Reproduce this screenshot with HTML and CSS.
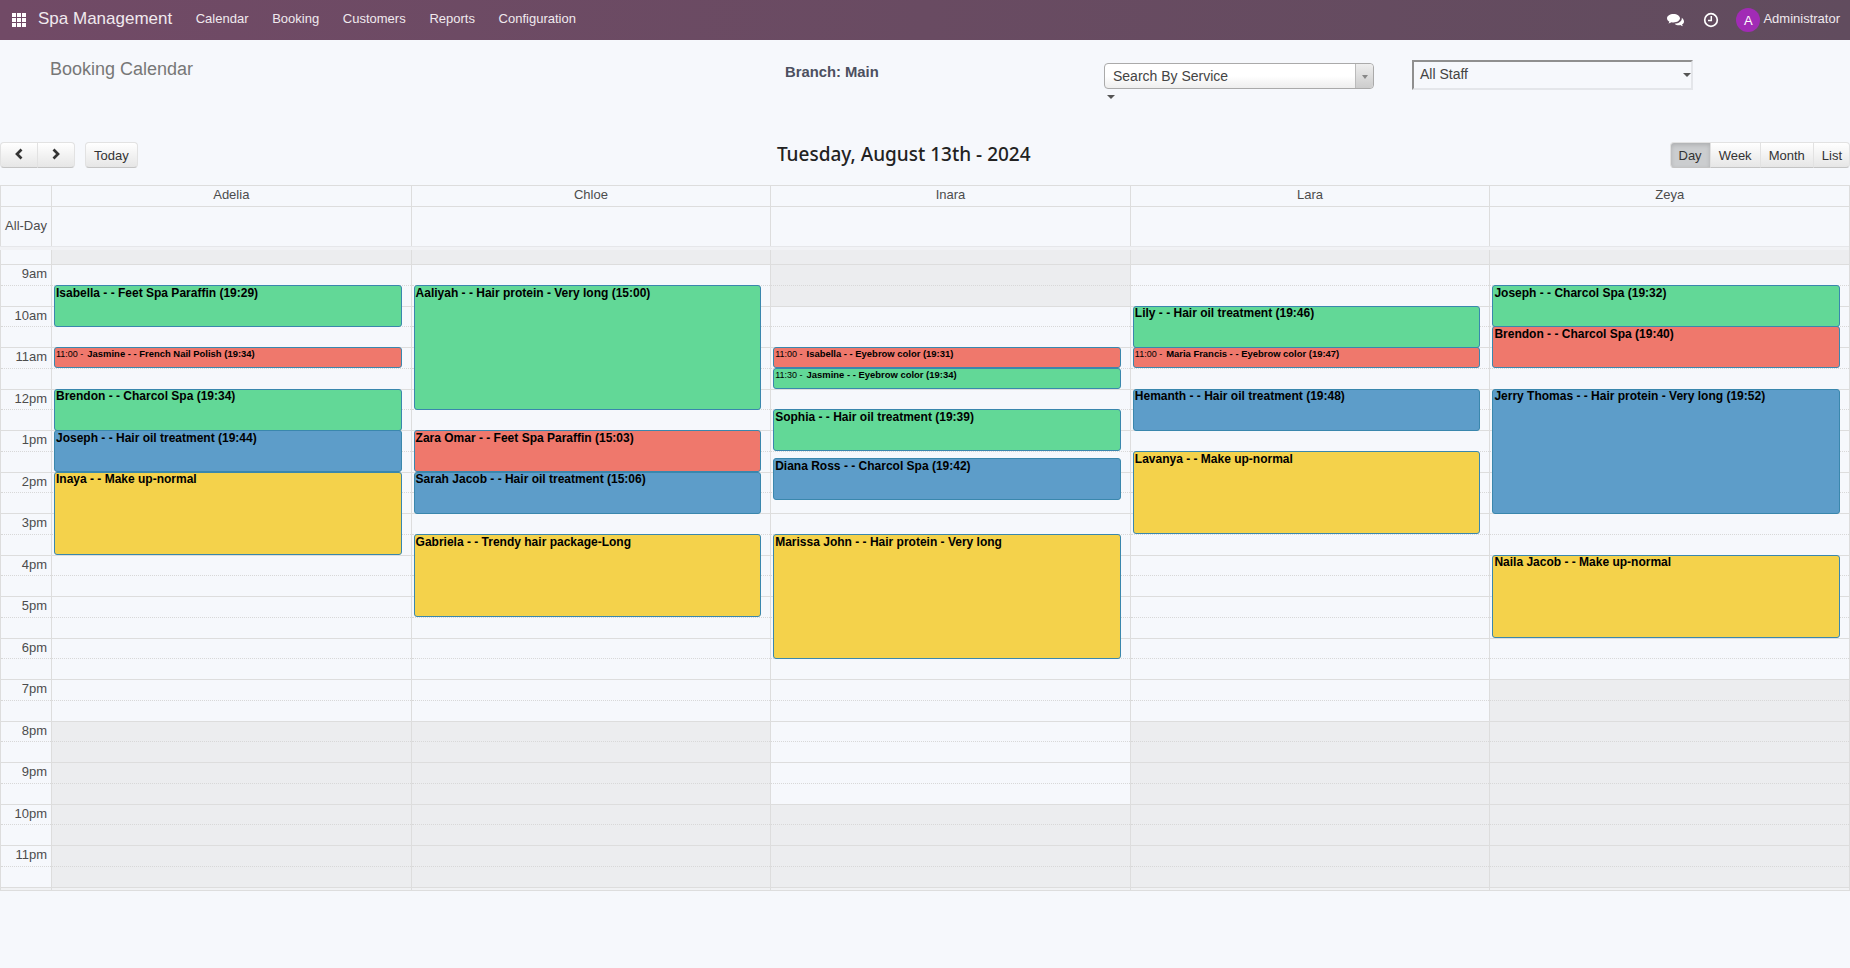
FILE: index.html
```html
<!DOCTYPE html>
<html lang="en">
<head>
    <meta charset="UTF-8">
    <title>Booking Calendar</title>
    <link rel="stylesheet" href="styles.css">
</head>
<body>

<nav class="navbar">
    <svg class="apps-icon" width="14" height="14" viewBox="0 0 14 14" fill="#fff">
        <rect x="0" y="0" width="4" height="4"/><rect x="5" y="0" width="4" height="4"/><rect x="10" y="0" width="4" height="4"/>
        <rect x="0" y="5" width="4" height="4"/><rect x="5" y="5" width="4" height="4"/><rect x="10" y="5" width="4" height="4"/>
        <rect x="0" y="10" width="4" height="4"/><rect x="5" y="10" width="4" height="4"/><rect x="10" y="10" width="4" height="4"/>
    </svg>
    <span class="brand">Spa Management</span>
    <a class="nav-link">Calendar</a>
    <a class="nav-link">Booking</a>
    <a class="nav-link">Customers</a>
    <a class="nav-link">Reports</a>
    <a class="nav-link">Configuration</a>
    <div class="nav-right">
        <svg class="chat-icon" width="17" height="14" viewBox="0 0 17 14" fill="#fff">
            <path d="M6.500 0C2.900 0 0 1.900 0 4.300c0 1.400.9 2.600 2.400 3.400-.2.700-.6 1.300-1.100 1.800 1.200-.2 2.300-.7 3.100-1.300.7.100 1.400.2 2.100.2 3.600 0 6.500-1.900 6.500-4.100S10.100 0 6.500 0z"/>
            <path d="M14.700 3.700c.1.300.1.500.1.800 0 2.900-3 5-7.100 5.200 1 1 2.500 1.500 4.100 1.500.5 0 1-.1 1.500-.2.700.6 1.600 1 2.600 1.200-.4-.5-.7-1-.9-1.600 1.300-.7 2-1.800 2-3.100 0-1.500-.9-2.900-2.300-3.800z"/>
        </svg>
        <svg class="clock-icon" width="16" height="16" viewBox="0 0 16 16" fill="none" stroke="#fff">
            <circle cx="8" cy="8" r="6.300" stroke-width="1.700"/>
            <path d="M8.300 4v4.400H5" stroke-width="1.500"/>
        </svg>
        <span class="avatar">A</span>
        <span class="user-name">Administrator</span>
    </div>
</nav>

<div class="filter-bar">
    <h3 class="page-title">Booking Calendar</h3>
    <div class="branch">Branch: Main</div>
    <div class="service-wrap">
        <div class="service-select">
            <span class="service-text">Search By Service</span>
            <span class="service-arrow"><i class="caret small"></i></span>
        </div>
        <i class="caret stray-caret"></i>
    </div>
    <div class="staff-select">
        <span>All Staff</span>
        <i class="caret"></i>
    </div>
</div>

<div class="toolbar">
    <div class="toolbar-left">
        <div class="btn-group">
            <button class="btn chevron-btn"><svg width="10" height="12" viewBox="0 0 10 12" fill="none" stroke="#333" stroke-width="2.700"><path d="M7.500 1.500 3 6l4.500 4.500"/></svg></button>
            <button class="btn chevron-btn"><svg width="10" height="12" viewBox="0 0 10 12" fill="none" stroke="#333" stroke-width="2.700"><path d="M2.500 1.500 7 6l-4.500 4.500"/></svg></button>
        </div>
        <button class="btn today-btn">Today</button>
    </div>
    <h2 class="cal-title">Tuesday, August 13th - 2024</h2>
    <div class="btn-group">
        <button class="btn view-btn active">Day</button>
        <button class="btn view-btn">Week</button>
        <button class="btn view-btn">Month</button>
        <button class="btn view-btn list-btn">List</button>
    </div>
</div>

<div class="calendar">
    <div class="cal-head">
        <div class="gutter-cell"></div>
        <div class="head-cell">Adelia</div>
        <div class="head-cell">Chloe</div>
        <div class="head-cell">Inara</div>
        <div class="head-cell">Lara</div>
        <div class="head-cell">Zeya</div>
    </div>
    <div class="cal-allday">
        <div class="gutter-cell allday-label">All-Day</div>
        <div class="allday-cell"></div>
        <div class="allday-cell"></div>
        <div class="allday-cell"></div>
        <div class="allday-cell"></div>
        <div class="allday-cell"></div>
    </div>
    <div class="divider"></div>
    <div class="cal-body" id="cal-body"></div>
</div>

<script src="calendar.js"></script>
</body>
</html>
```

FILE: styles.css
```css
* {
    box-sizing: border-box;
}
html, body {
    height: 100%;
}
body {
    margin: 0;
    background-color: #f6f8fc;
    font-family: "Liberation Sans", Arial, sans-serif;
    font-size: 13px;
    color: #4c4c4c;
    overflow: hidden;
}

/* top bar */
.navbar {
    display: flex;
    align-items: center;
    height: 40px;
    padding-left: 12px;
    background-image: linear-gradient(to right, #714a66, #614c5e);
    color: #fff;
}
.apps-icon {
    margin-right: 12px;
}
.brand {
    font-size: 17px;
    margin-right: 23.500px;
    margin-top: -3px;
    color: #f0e9ee;
}
.nav-link {
    font-size: 13px;
    margin-right: 23.700px;
    margin-top: -3px;
    color: #f0e9ee;
}
.nav-right {
    display: flex;
    align-items: center;
    margin-left: auto;
    padding-right: 10px;
}
.chat-icon {
    margin-right: 19px;
    margin-top: 1px;
}
.clock-icon {
    margin-right: 17px;
}
.avatar {
    width: 24px;
    height: 24px;
    margin-right: 3px;
    border-radius: 50%;
    background-color: #a12bb5;
    font-size: 13px;
    line-height: 25px;
    text-align: center;
}
.user-name {
    font-size: 13px;
    color: #f0e9ee;
    margin-top: -4px;
}

/* filters */
.filter-bar {
    display: flex;
    height: 100px;
}
.page-title {
    width: 735px;
    margin: 19px 0 0 50px;
    font-size: 18px;
    font-weight: 400;
    line-height: 21px;
    color: #777;
}
.branch {
    width: 319px;
    margin-top: 24px;
    font-size: 14.800px;
    font-weight: bold;
    line-height: 17px;
    color: #4c5060;
}
.service-wrap {
    width: 308px;
    margin-top: 23px;
}
.service-select {
    display: flex;
    width: 270px;
    height: 26px;
    border: 1px solid #aaa;
    border-radius: 4px;
    background-image: linear-gradient(to bottom, #fff 50%, #eee);
    font-size: 14px;
    line-height: 24px;
    color: #444;
}
.service-text {
    flex: 1;
    padding-left: 8px;
}
.service-arrow {
    display: flex;
    align-items: center;
    justify-content: center;
    width: 18px;
    border-left: 1px solid #bbb;
    border-radius: 0 4px 4px 0;
    background-image: linear-gradient(to bottom, #eee, #ccc);
}
.caret {
    display: inline-block;
    border-top: 4px solid #555;
    border-left: 4px solid transparent;
    border-right: 4px solid transparent;
}
.caret.small {
    margin-top: 2px;
    border-top-color: #888;
    border-left-width: 3px;
    border-right-width: 3px;
}
.stray-caret {
    display: block;
    width: 0;
    margin: 6px 0 0 3px;
}
.staff-select {
    display: flex;
    align-items: center;
    justify-content: space-between;
    width: 281px;
    height: 30px;
    margin-top: 20px;
    padding-left: 6px;
    border: 2px solid;
    border-color: #8f8f8f #e4e6ea #e4e6ea #8f8f8f;
    font-size: 14px;
    color: #444;
}
.staff-select span {
    margin-top: -3px;
}

/* calendar toolbar */
.toolbar {
    display: flex;
    align-items: flex-start;
    justify-content: space-between;
    height: 45px;
    padding-top: 2px;
}
.toolbar-left {
    display: flex;
    width: 138px;
}
.btn-group {
    display: flex;
}
.btn {
    height: 26px;
    padding: 0 8px;
    border: 1px solid #e2e2e2;
    border-bottom-color: #c4c4c4;
    background-image: linear-gradient(to bottom, #fff, #e6e6e6);
    font-family: "Liberation Sans", Arial, sans-serif;
    font-size: 13px;
    color: #333;
}
.btn + .btn {
    margin-left: -1px;
}
.btn-group .btn:first-child {
    border-radius: 4px 0 0 4px;
}
.btn-group .btn:last-child {
    border-radius: 0 4px 4px 0;
}
.chevron-btn {
    width: 38px;
}
.today-btn {
    margin-left: 10px;
    border-radius: 4px;
}
.view-btn.active {
    background-image: none;
    background-color: #cbcdcf;
    box-shadow: inset 0 2px 4px rgba(0, 0, 0, 0.15);
}
.list-btn {
    padding-right: 7px;
}
.cal-title {
    margin: 1px 0 0;
    font-family: "Noto Sans", sans-serif;
    font-size: 19px;
    font-weight: 500;
    line-height: 22px;
    color: #222;
}

/* calendar grid */
.calendar {
    border-right: 1px solid #ddd;
    border-bottom: 1px solid #ddd;
}
.cal-head, .cal-allday, .cal-body {
    display: grid;
    grid-template-columns: 51px repeat(5, 1fr);
}
.cal-head {
    height: 22px;
    border-top: 1px solid #ddd;
    border-bottom: 1px solid #ddd;
}
.head-cell {
    border-left: 1px solid #ddd;
    text-align: center;
    font-size: 13px;
    line-height: 18px;
}
.gutter-cell {
    border-left: 1px solid #ddd;
}
.cal-allday {
    height: 39px;
}
.allday-cell {
    border-left: 1px solid #ddd;
}
.allday-label {
    padding-right: 4px;
    text-align: right;
    line-height: 37px;
}
.divider {
    height: 4px;
    background-color: #f1f2f5;
    border-top: 1px solid #e6e7ea;
}
.time-col, .day-col {
    border-left: 1px solid #ddd;
}
.day-col {
    position: relative;
}
.slot {
    height: 20.750px;
    border-bottom: 1px dotted #d8d8d8;
}
.slot.hour-end {
    border-bottom: 1px solid #ddd;
}
.slot.stub {
    height: 15px;
    border-bottom: 1px solid #ddd;
}
.slot.tail {
    height: 2.500px;
    border: none;
    background-color: #f1f2f4;
}
.day-col .closed {
    background-color: #ecedef;
}
.time-label {
    padding-right: 4px;
    text-align: right;
    font-size: 13px;
    line-height: 17px;
}
.event {
    position: absolute;
    left: 2px;
    right: 9px;
    overflow: hidden;
    padding-left: 1px;
    border: 1px solid #3a87ad;
    border-radius: 3px;
    font-size: 12px;
    font-weight: bold;
    line-height: 14px;
    color: #000;
}
.event-label {
    margin-top: -0.100px;
}
.event.short {
    font-size: 9.450px;
    line-height: 12px;
}
.event-time {
    margin-right: 4px;
    font-size: 9px;
    font-weight: normal;
}
.green {
    background-color: #62d897;
}
.red {
    background-color: #ef786c;
}
.blue {
    background-color: #5d9dc9;
}
.yellow {
    background-color: #f4d24b;
}
```

FILE: calendar.js
```js
const SLOT = 20.75;
const OFFSET = 14;

// first closed slot onwards, counted from 9am; slots 0-1 closed only for Inara
const columns = [
    { closedFrom: 22, events: [
        { from: 1, to: 3, color: 'green', text: 'Isabella - - Feet Spa Paraffin (19:29)' },
        { from: 4, to: 5, color: 'red', time: '11:00', text: 'Jasmine - - French Nail Polish (19:34)' },
        { from: 6, to: 8, color: 'green', text: 'Brendon - - Charcol Spa (19:34)' },
        { from: 8, to: 10, color: 'blue', text: 'Joseph - - Hair oil treatment (19:44)' },
        { from: 10, to: 14, color: 'yellow', text: 'Inaya - - Make up-normal' }
    ] },
    { closedFrom: 22, events: [
        { from: 1, to: 7, color: 'green', text: 'Aaliyah - - Hair protein - Very long (15:00)' },
        { from: 8, to: 10, color: 'red', text: 'Zara Omar - - Feet Spa Paraffin (15:03)' },
        { from: 10, to: 12, color: 'blue', text: 'Sarah Jacob - - Hair oil treatment (15:06)' },
        { from: 13, to: 17, color: 'yellow', text: 'Gabriela - - Trendy hair package-Long' }
    ] },
    { closedFrom: 26, closedMorning: true, events: [
        { from: 4, to: 5, color: 'red', time: '11:00', text: 'Isabella - - Eyebrow color (19:31)' },
        { from: 5, to: 6, color: 'green', time: '11:30', text: 'Jasmine - - Eyebrow color (19:34)' },
        { from: 7, to: 9, color: 'green', text: 'Sophia - - Hair oil treatment (19:39)' },
        { from: 9.36, to: 11.36, color: 'blue', text: 'Diana Ross - - Charcol Spa (19:42)' },
        { from: 13, to: 19, color: 'yellow', text: 'Marissa John - - Hair protein - Very long' }
    ] },
    { closedFrom: 22, events: [
        { from: 2, to: 4, color: 'green', text: 'Lily - - Hair oil treatment (19:46)' },
        { from: 4, to: 5, color: 'red', time: '11:00', text: 'Maria Francis - - Eyebrow color (19:47)' },
        { from: 6, to: 8, color: 'blue', text: 'Hemanth - - Hair oil treatment (19:48)' },
        { from: 9, to: 13, color: 'yellow', text: 'Lavanya - - Make up-normal' }
    ] },
    { closedFrom: 20, events: [
        { from: 1, to: 3, color: 'green', text: 'Joseph - - Charcol Spa (19:32)' },
        { from: 3, to: 5, color: 'red', text: 'Brendon - - Charcol Spa (19:40)' },
        { from: 6, to: 12, color: 'blue', text: 'Jerry Thomas - - Hair protein - Very long (19:52)' },
        { from: 14, to: 18, color: 'yellow', text: 'Naila Jacob - - Make up-normal' }
    ] }
];

const hours = ['9am', '10am', '11am', '12pm', '1pm', '2pm', '3pm', '4pm', '5pm', '6pm', '7pm', '8pm', '9pm', '10pm', '11pm'];

function slotClass(i) {
    return i % 2 === 1 ? 'slot hour-end' : 'slot';
}

function timeColumn() {
    let html = '<div class="time-col"><div class="slot stub"></div>';
    for (let i = 0; i < 30; i++) {
        const label = i % 2 === 0 ? hours[i / 2] : '';
        html += `<div class="${slotClass(i)} time-label">${label}</div>`;
    }
    return html + '<div class="slot tail"></div></div>';
}

function eventHtml(ev) {
    const top = OFFSET + ev.from * SLOT;
    const height = (ev.to - ev.from) * SLOT + 0.5;
    const isShort = ev.to - ev.from <= 1;
    const time = ev.time ? `<span class="event-time">${ev.time} -</span>` : '';
    return `<div class="event ${ev.color}${isShort ? ' short' : ''}" style="top:${top}px;height:${height}px"><div class="event-label">${time}${ev.text}</div></div>`;
}

function dayColumn(col) {
    let html = '<div class="day-col"><div class="slot stub closed"></div>';
    for (let i = 0; i < 30; i++) {
        const closed = i >= col.closedFrom || (col.closedMorning && i < 2);
        html += `<div class="${slotClass(i)}${closed ? ' closed' : ''}"></div>`;
    }
    return html + '<div class="slot tail"></div>' + col.events.map(eventHtml).join('') + '</div>';
}

document.getElementById('cal-body').innerHTML = timeColumn() + columns.map(dayColumn).join('');
```
